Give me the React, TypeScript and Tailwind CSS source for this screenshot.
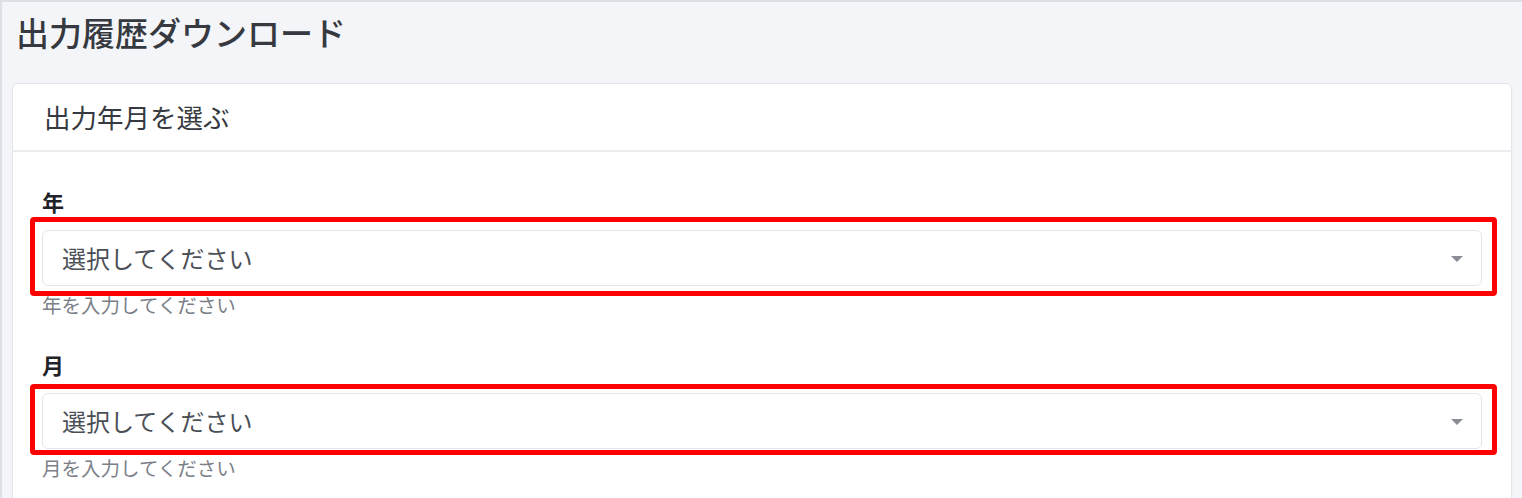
import React from "react";

const font = { fontFamily: '"Noto Sans CJK JP", "Noto Sans", sans-serif' };

function Field({ label, help, boxClass }: { label: string; help: string; boxClass: string }) {
  return (
    <div>
      <div className="text-[22px] leading-[30px] font-bold text-[#1f2328]">{label}</div>
      <div className="relative mt-[14px]">
        <div className="h-[56px] w-full rounded-[6px] border border-[#e3e5e9] bg-white flex items-center justify-between pl-[19px] pr-[18px]">
          <span className="text-[24px] text-[#4b4f56]">選択してください</span>
          <svg width="12" height="6" viewBox="0 0 12 6" className="mt-[1px]">
            <path d="M0 0 L12 0 L6 6 Z" fill="#8a8d93" />
          </svg>
        </div>
        <div className={`absolute border-[5px] border-[#ff0000] rounded-[4px] pointer-events-none ${boxClass}`} />
      </div>
      <div className="mt-[5px] text-[19.5px] leading-[28px] text-[#7b8088]">{help}</div>
    </div>
  );
}

export default function App() {
  return (
    <div style={font} className="w-full h-[498px] overflow-hidden bg-[#f4f5f8] border-t-[2px] border-l-[2px] border-[#dcdfe4]">
      <div className="pl-[14px] pt-[8px] text-[33px] leading-[44px] font-medium text-[#363a40]">出力履歴ダウンロード</div>
      <div className="ml-[10px] mr-[10px] mt-[29px] rounded-[6px] border border-[#e4e6ea] bg-white shadow-[0_1px_2px_rgba(0,0,0,0.06)]">
        <div className="h-[68px] flex items-center pl-[31px] border-b-[2px] border-[#ebecef] text-[26.5px] text-[#363a40]">
          出力年月を選ぶ
        </div>
        <div className="px-[29px] pt-[34px] pb-[20px]">
          <Field label="年" help="年を入力してください" boxClass="-left-[12px] -top-[13px] -right-[15px] -bottom-[10px]" />
          <div className="mt-[30px]">
            <Field label="月" help="月を入力してください" boxClass="-left-[12px] -top-[9px] -right-[15px] -bottom-[6px]" />
          </div>
        </div>
      </div>
    </div>
  );
}
